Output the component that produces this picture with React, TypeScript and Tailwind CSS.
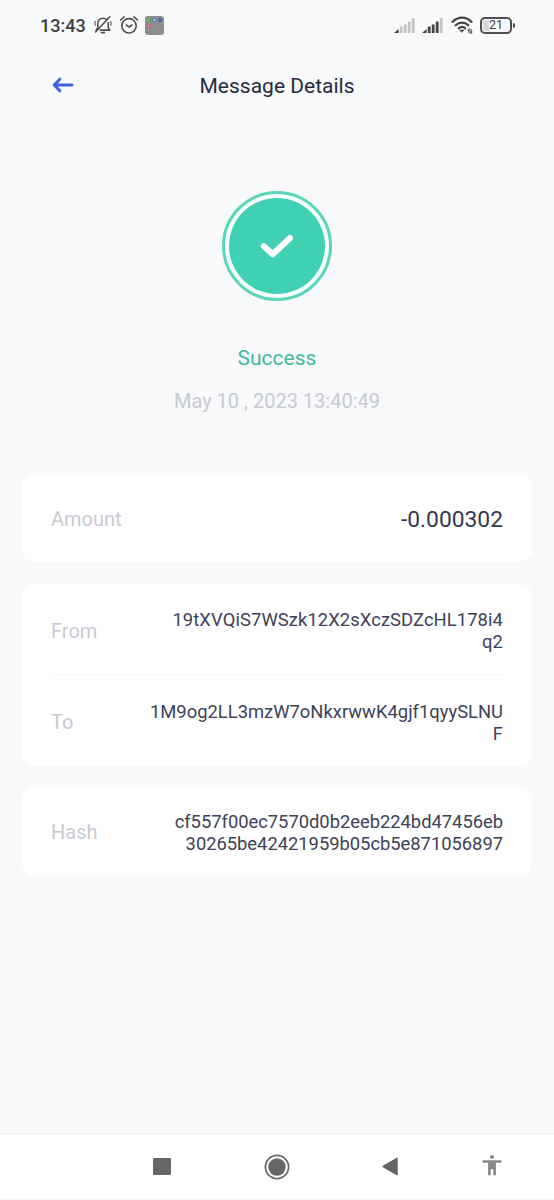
import React from "react";

interface DetailRowProps {
  label: string;
  lines: string[];
  large?: boolean;
  labelClass?: string;
  valueClass?: string;
}

const DetailRow: React.FC<DetailRowProps> = ({
  label,
  lines,
  large,
  labelClass = "pt-[2px]",
  valueClass = "pt-[2px]",
}) => {
  return (
    <div className="flex h-full items-center justify-between">
      <span className={`text-[20px] leading-6 text-[#c8cad3] ${labelClass}`}>{label}</span>
      <div
        className={
          large
            ? "pt-[4px] text-[22.8px] leading-7 text-[#34374f]"
            : `text-right text-[18.4px] leading-[22px] text-[#3e4258] ${valueClass}`
        }
      >
        {lines.map((line) => (
          <div key={line}>{line}</div>
        ))}
      </div>
    </div>
  );
};

const BellOffIcon = () => (
  <svg width="20" height="20" viewBox="0 0 20 20" fill="none" stroke="#505050" strokeWidth="1.6" strokeLinecap="round" strokeLinejoin="round">
    <path d="M4.8 12.2V8.6C4.8 5.4 6.8 3.3 10 3.3c1.500 0 2.700.5 3.600 1.300M15.200 7.600v5l1.700 2.500H7.200M3.200 15.100l1.600-2.500" />
    <path d="M8.500 17.600h3M16.800 1.800L2.600 17" />
    <path d="M2.300 6.600c-.5 1.100-.5 2.400 0 3.500M17.700 6.600c.5 1.100.5 2.400 0 3.500" strokeWidth="1.500" opacity=".75" />
  </svg>
);

const AlarmIcon = () => (
  <svg width="20" height="20" viewBox="0 0 20 20" fill="none" stroke="#505050" strokeWidth="1.6" strokeLinecap="round" strokeLinejoin="round">
    <circle cx="10" cy="10.800" r="7.200" />
    <path d="M7.300 10l2.800 2.200L13 10M1.600 5l3.400-3.100M18.400 5L15 1.900" />
  </svg>
);

const FolderIcon = () => (
  <svg width="19" height="19" viewBox="0 0 19 19">
    <rect width="19" height="19" rx="3" fill="#8e8e90" />
    <circle cx="3.700" cy="4" r="2.200" fill="#56ad5f" />
    <circle cx="9.500" cy="4" r="2.200" fill="#4f83b5" />
    <path d="M8 4.800l1.500-2 1.500 2z" fill="#d5e5f0" />
    <circle cx="15.300" cy="4" r="2.200" fill="#5269a6" />
    <circle cx="3.700" cy="10" r="2.200" fill="#d0608c" />
    <path d="M2 4.800l1.800-1.900M3 10.300l1.400-.8" stroke="#e6e4e9" strokeWidth=".8" />
  </svg>
);

const SignalIcon = ({ level }: { level: number }) => (
  <svg width="21" height="15" viewBox="0 0 21 15">
    <path d="M0 15l4.600-4v4z" fill="#454545" />
    {[
      { x: 5.8, h: 6.5 },
      { x: 9.8, h: 8.5 },
      { x: 13.8, h: 11.5 },
      { x: 17.8, h: 15 },
    ].map((bar, i) => (
      <rect key={bar.x} x={bar.x} y={15 - bar.h} width="2.800" height={bar.h} rx=".5" fill={i < level ? "#454545" : "#c3c4c6"} />
    ))}
  </svg>
);

const WifiIcon = () => (
  <svg width="23" height="19" viewBox="0 0 23 19" fill="none" stroke="#454545" strokeLinecap="round">
    <path d="M1.500 5.900C7 .3 15.200.3 20.500 5.900M4.700 9.300c3.600-3.700 9-3.700 12.600 0" strokeWidth="2.200" />
    <path d="M7.800 12.400c1.900-1.800 4.500-1.800 6.400 0" strokeWidth="2.200" />
    <path d="M9.300 14.200h3.400L11 16z" fill="#454545" strokeWidth="1" />
    <path d="M18 16.800v-3.600l-1 1.200M20 13.400V17l1-1.200" strokeWidth="1.100" />
  </svg>
);

const Battery: React.FC = () => (
  <div className="flex items-center">
    <div className="relative flex h-[17px] w-[32px] items-center justify-center rounded-[5px] border-2 border-[#505050]">
      <div className="absolute left-[1px] top-[1px] h-[11px] w-[6px] rounded-l-[2px] bg-[#d8d9db]" />
      <span className="relative pt-px text-[12.5px] leading-none text-[#3d3d3d]">21</span>
    </div>
    <div className="ml-px h-[5px] w-[2px] rounded-r-sm bg-[#454545]" />
  </div>
);

const StatusBar: React.FC = () => (
  <div className="flex h-[50px] items-center justify-between pl-[40px] pr-[39px]">
    <div className="flex items-center">
      <span className="w-[53px] pt-px text-[18px] font-medium leading-6 text-[#3d3d3d]">13:43</span>
      <BellOffIcon />
      <div className="ml-[6px]">
        <AlarmIcon />
      </div>
      <div className="ml-[6px]">
        <FolderIcon />
      </div>
    </div>
    <div className="flex items-center">
      <div className="pt-px">
        <SignalIcon level={0} />
      </div>
      <div className="ml-[7px] pt-px">
        <SignalIcon level={3} />
      </div>
      <div className="ml-[8px]">
        <WifiIcon />
      </div>
      <div className="ml-[6px]">
        <Battery />
      </div>
    </div>
  </div>
);

const Header: React.FC = () => (
  <div className="grid h-[70px] grid-cols-[50px_1fr_50px] items-center px-[38px]">
    <button className="flex h-[50px] w-[50px] items-center justify-center rounded-lg bg-[#f9fafc]">
      <svg width="22" height="16" viewBox="0 0 22 16" fill="none" stroke="#3f62df" strokeWidth="3" strokeLinecap="round" strokeLinejoin="round">
        <path d="M20 8H2.500M7.800 2.200L2.200 8l5.600 5.800" />
      </svg>
    </button>
    <h1 className="pt-[2px] text-center text-[21px] leading-7 text-[#272b3c]">Message Details</h1>
  </div>
);

const NavBar: React.FC = () => (
  <div className="h-[67px] border-t border-[#e9ecef] bg-white">
    <div className="grid h-[65px] grid-cols-[324px_74px_1fr] items-center">
      <div className="flex items-center justify-between pl-[153px] pr-[34px]">
        <div className="h-[17px] w-[18px] rounded-[1px] bg-[#666]" />
        <svg width="26" height="26" viewBox="0 0 26 26">
          <circle cx="13" cy="13" r="11.600" fill="none" stroke="#666" strokeWidth="1.700" />
          <circle cx="13" cy="13" r="8.700" fill="#666" />
        </svg>
      </div>
      <svg className="justify-self-end" width="16" height="19" viewBox="0 0 16 19">
        <path d="M15 1.500v16L1.200 9.500z" fill="#666" stroke="#666" strokeWidth="1.500" strokeLinejoin="round" />
      </svg>
      <div className="pb-[2px] pl-[84px]">
        <svg width="20" height="21" viewBox="0 0 20 21" fill="#888">
          <circle cx="10" cy="2" r="2" />
          <path d="M.500 5.200h19v2.600h-5.600V20.300h-2.600v-6H8.700v6H6.100V7.800H.500z" />
        </svg>
      </div>
    </div>
    <div className="h-px bg-[#f5f5f5]" />
  </div>
);

const App: React.FC = () => {
  return (
    <div className="flex h-[1200px] w-[554px] flex-col overflow-hidden bg-[#f7f9fb] font-['Roboto',sans-serif]">
      <StatusBar />
      <Header />
      <main className="flex-1">
        <div className="flex flex-col items-center pt-[71px]">
          <div className="flex h-[110px] w-[110px] items-center justify-center rounded-full border-[3px] border-[#5dd5b9] bg-[#f5fdfc]">
            <div className="flex h-[96px] w-[96px] items-center justify-center rounded-full bg-[#40d0b3]">
              <svg width="36" height="26" viewBox="0 0 36 26" fill="none" stroke="#fff" strokeWidth="6" strokeLinecap="round" strokeLinejoin="round">
                <path d="M4.800 13.300l9 8L31 5" />
              </svg>
            </div>
          </div>
          <p className="mt-[43px] text-[21px] leading-7 text-[#42ba9b]">Success</p>
          <p className="mt-[15px] text-[20px] leading-7 text-[#c8cad3]">May 10 , 2023 13:40:49</p>
        </div>
        <div className="mt-[58px] flex flex-col gap-[21.500px] px-[22px]">
          <section className="h-[89px] rounded-[13px] bg-white px-[29px]">
            <DetailRow label="Amount" lines={["-0.000302"]} large />
          </section>
          <section className="h-[182px] rounded-[13px] bg-white px-[29px]">
            <div className="h-[91px] border-b border-[#f6f7f9] pt-[2px]">
              <DetailRow
                label="From"
                lines={["19tXVQiS7WSzk12X2sXczSDZcHL178i4", "q2"]}
                valueClass="pt-[3px] tracking-[0.075px]"
              />
            </div>
            <div className="h-[91px] pt-[3px]">
              <DetailRow
                label="To"
                lines={["1M9og2LL3mzW7oNkxrwwK4gjf1qyySLNU", "F"]}
                labelClass="pt-0"
              />
            </div>
          </section>
          <section className="h-[89px] rounded-[13px] bg-white px-[29px]">
            <DetailRow
              label="Hash"
              lines={["cf557f00ec7570d0b2eeb224bd47456eb", "30265be42421959b05cb5e871056897"]}
              labelClass="pt-0"
              valueClass="pt-[2px] tracking-[-0.035px]"
            />
          </section>
        </div>
      </main>
      <NavBar />
    </div>
  );
};

export default App;
